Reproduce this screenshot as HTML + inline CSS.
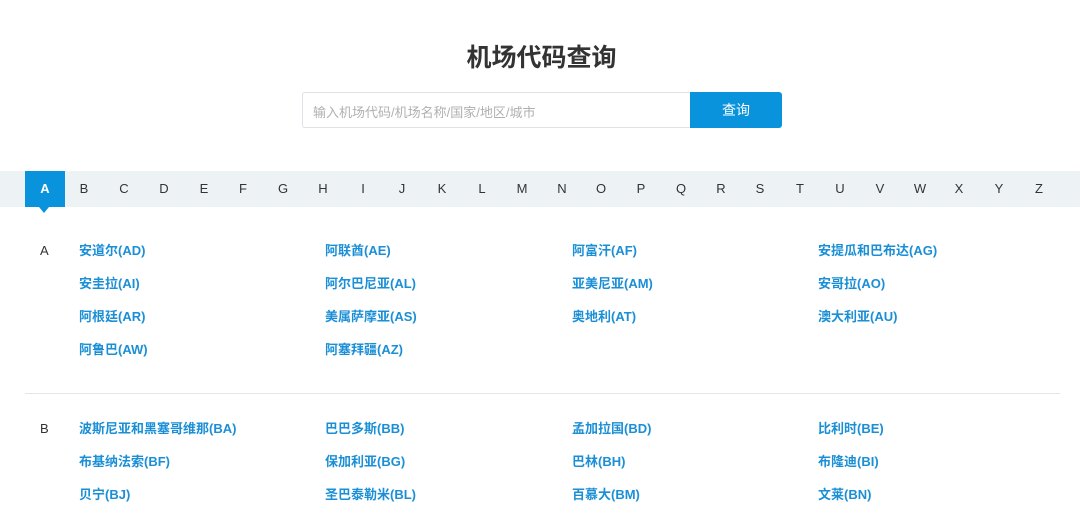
<!DOCTYPE html>
<html><head><meta charset="utf-8"><style>
*{margin:0;padding:0;box-sizing:border-box}
body{width:1080px;height:517px;overflow:hidden;background:#fff;font-family:"Liberation Sans","Noto Sans CJK SC",sans-serif;position:relative}
h1{position:absolute;top:41px;left:0;width:1083px;text-align:center;font-size:25px;color:#333;font-weight:bold;line-height:34px}
.inp{position:absolute;left:302px;top:92px;width:389px;height:36px;border:1px solid #dde2e6;border-right:none;border-radius:3px 0 0 3px;font-size:13px;color:#b0b0b0;padding:9px 0 0 10px}
.btn{position:absolute;left:690px;top:92px;width:92px;height:36px;background:#0a93dd;color:#fff;font-size:14px;text-align:center;line-height:36px;border-radius:0 3px 3px 0}
.bar{position:absolute;left:0;top:171px;width:1080px;height:36px;background:#edf2f5}
.bar span{position:absolute;top:0;width:40px;text-align:center;line-height:36px;font-size:13px;color:#333}
.bar span.a{background:#0a93dd;color:#fff;font-weight:bold}
.tri{position:absolute;left:39px;top:207px;border-left:5px solid transparent;border-right:5px solid transparent;border-top:6px solid #0a93dd}
.l{position:absolute;font-size:13px;color:#333;line-height:16px}
.k{position:absolute;font-size:13px;color:#1a8fd6;font-weight:bold;line-height:16px}
.hr{position:absolute;left:25px;top:393px;width:1035px;height:1px;background:#e5e5e5}
</style></head><body>
<h1>机场代码查询</h1>
<div class="inp">输入机场代码/机场名称/国家/地区/城市</div>
<div class="btn">查询</div>
<div class="bar">
<span class="a" style="left:25px">A</span><span style="left:64px">B</span><span style="left:104px">C</span><span style="left:144px">D</span><span style="left:184px">E</span><span style="left:223px">F</span><span style="left:263px">G</span><span style="left:303px">H</span><span style="left:343px">I</span><span style="left:382px">J</span><span style="left:422px">K</span><span style="left:462px">L</span><span style="left:502px">M</span><span style="left:542px">N</span><span style="left:581px">O</span><span style="left:621px">P</span><span style="left:661px">Q</span><span style="left:701px">R</span><span style="left:740px">S</span><span style="left:780px">T</span><span style="left:820px">U</span><span style="left:860px">V</span><span style="left:900px">W</span><span style="left:939px">X</span><span style="left:979px">Y</span><span style="left:1019px">Z</span>
</div>
<div class="tri"></div>
<div class="l" style="left:40px;top:243px">A</div>
<div class="k" style="left:79px;top:243px">安道尔(AD)</div><div class="k" style="left:325px;top:243px">阿联酋(AE)</div><div class="k" style="left:572px;top:243px">阿富汗(AF)</div><div class="k" style="left:818px;top:243px">安提瓜和巴布达(AG)</div>
<div class="k" style="left:79px;top:276px">安圭拉(AI)</div><div class="k" style="left:325px;top:276px">阿尔巴尼亚(AL)</div><div class="k" style="left:572px;top:276px">亚美尼亚(AM)</div><div class="k" style="left:818px;top:276px">安哥拉(AO)</div>
<div class="k" style="left:79px;top:309px">阿根廷(AR)</div><div class="k" style="left:325px;top:309px">美属萨摩亚(AS)</div><div class="k" style="left:572px;top:309px">奥地利(AT)</div><div class="k" style="left:818px;top:309px">澳大利亚(AU)</div>
<div class="k" style="left:79px;top:342px">阿鲁巴(AW)</div><div class="k" style="left:325px;top:342px">阿塞拜疆(AZ)</div>
<div class="hr"></div>
<div class="l" style="left:40px;top:421px">B</div>
<div class="k" style="left:79px;top:421px">波斯尼亚和黑塞哥维那(BA)</div><div class="k" style="left:325px;top:421px">巴巴多斯(BB)</div><div class="k" style="left:572px;top:421px">孟加拉国(BD)</div><div class="k" style="left:818px;top:421px">比利时(BE)</div>
<div class="k" style="left:79px;top:454px">布基纳法索(BF)</div><div class="k" style="left:325px;top:454px">保加利亚(BG)</div><div class="k" style="left:572px;top:454px">巴林(BH)</div><div class="k" style="left:818px;top:454px">布隆迪(BI)</div>
<div class="k" style="left:79px;top:487px">贝宁(BJ)</div><div class="k" style="left:325px;top:487px">圣巴泰勒米(BL)</div><div class="k" style="left:572px;top:487px">百慕大(BM)</div><div class="k" style="left:818px;top:487px">文莱(BN)</div>
</body></html>
